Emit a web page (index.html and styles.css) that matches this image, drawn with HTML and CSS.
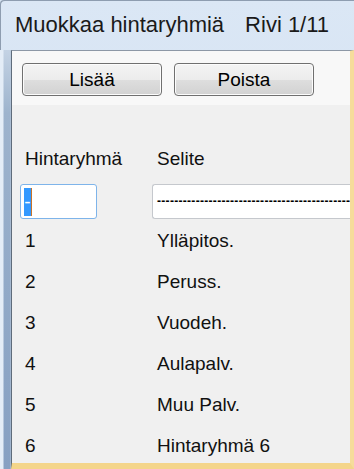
FILE: index.html
```html
<!DOCTYPE html>
<html lang="fi">

    <head>

        <meta charset="UTF-8">
        <meta name="viewport" content="width=device-width, initial-scale=1.0">
        <title>Muokkaa hintaryhmiä</title>

        <link rel="stylesheet" href="styles.css">

    </head>

    <body>

        <div class="window">

            <header class="titlebar">
                <span class="title">Muokkaa hintaryhmiä</span>
                <span class="row-count">Rivi 1/11</span>
            </header>

            <div class="window-body">

                <div class="side-frame"></div>

                <main class="client">

                    <section class="toolbar">
                        <button class="btn">Lisää</button>
                        <button class="btn">Poista</button>
                    </section>

                    <section class="price-groups">

                        <div class="cell head">Hintaryhmä</div>
                        <div class="cell head">Selite</div>

                        <div class="field field-code focused"><span class="selected">-</span></div>
                        <div class="field field-desc"><span class="dashes">--------------------------------------------------</span></div>

                        <div class="cell">1</div>
                        <div class="cell">Ylläpitos.</div>
                        <div class="cell">2</div>
                        <div class="cell">Peruss.</div>
                        <div class="cell">3</div>
                        <div class="cell">Vuodeh.</div>
                        <div class="cell">4</div>
                        <div class="cell">Aulapalv.</div>
                        <div class="cell">5</div>
                        <div class="cell">Muu Palv.</div>
                        <div class="cell">6</div>
                        <div class="cell">Hintaryhmä 6</div>

                    </section>

                </main>

            </div>

        </div>

    </body>

</html>
```

FILE: styles.css
```css
* 
    {
        margin: 0;
        padding: 0;
        box-sizing: border-box;
    }

body 
    {
        font-family: 'Liberation Sans', Arial, sans-serif;
        width: 354px;
        height: 469px;
        overflow: hidden;
        background-color: #d6e4f3;
    }

.window 
    {
        display: flex;
        flex-direction: column;
        width: 354px;
        height: 469px;
        background: linear-gradient(#dbe7f5, #cbdcef);
        border-top-left-radius: 4px;
        box-shadow: inset 1px 1px 0 #8e9db0;
    }

.titlebar 
    {
        display: flex;
        align-items: center;
        height: 50px;
        padding-left: 15px;
        font-size: 22px;
        color: #1a1a1a;
        white-space: nowrap;
    }

.row-count 
    {
        margin-left: 21px;
    }

.window-body 
    {
        display: flex;
        flex: 1;
        min-height: 0;
    }

.side-frame 
    {
        width: 11px;
        background:
            linear-gradient(to right, #e4edf7 0, #e4edf7 3px, transparent 4px, transparent 10px, #b7c6d8 11px),
            linear-gradient(#c4d3e4 0, #9db3cd 15%, #86a0c2 100%);
    }

.client 
    {
        flex: 1;
        background-color: #f0f0f0;
        border-left: 1px solid #5f6c7b;
        border-top: 1px solid #8d98a6;
        border-right: 4px solid #f6dc9b;
        border-bottom: 6px solid #f4d58a;
        overflow: hidden;
    }

.toolbar 
    {
        display: flex;
        gap: 12px;
        height: 54px;
        padding: 12px 0 0 10px;
        background-color: #f8f8f8;
    }

.btn 
    {
        width: 140px;
        height: 33px;
        font-family: inherit;
        font-size: 19px;
        color: #000;
        border: 1px solid #707070;
        border-radius: 4px;
        background: linear-gradient(#f4f4f4 0, #ececec 50%, #dedede 51%, #d2d2d2 100%);
        box-shadow: inset 0 0 0 1px #fcfcfc;
    }

.price-groups 
    {
        display: grid;
        grid-template-columns: 132px 1fr;
        grid-auto-rows: 41px;
        padding: 33px 0 0 8px;
        font-size: 19px;
        color: #111;
    }

.cell 
    {
        line-height: 41px;
        padding-left: 5px;
        white-space: nowrap;
    }

.field 
    {
        height: 35px;
        margin-top: 5px;
        background-color: #fff;
        border: 1px solid #c5c8cd;
        border-radius: 3px;
        overflow: hidden;
        white-space: nowrap;
    }

.field-code 
    {
        width: 77px;
        padding: 3px 0 0 3px;
    }

.focused 
    {
        border-color: #7eb4ea;
    }

.selected 
    {
        display: inline-block;
        width: 7px;
        height: 28px;
        line-height: 28px;
        text-align: center;
        background-color: #3399ff;
        color: #fff;
        font-size: 19px;
        box-shadow: 1px 0 0 #c8742a;
    }

.field-desc 
    {
        padding-left: 4px;
        border-right: none;
        border-top-right-radius: 0;
        border-bottom-right-radius: 0;
    }

.dashes 
    {
        display: block;
        font-size: 12px;
        font-weight: bold;
        line-height: 33px;
        letter-spacing: 0.3px;
        color: #000;
    }
```
